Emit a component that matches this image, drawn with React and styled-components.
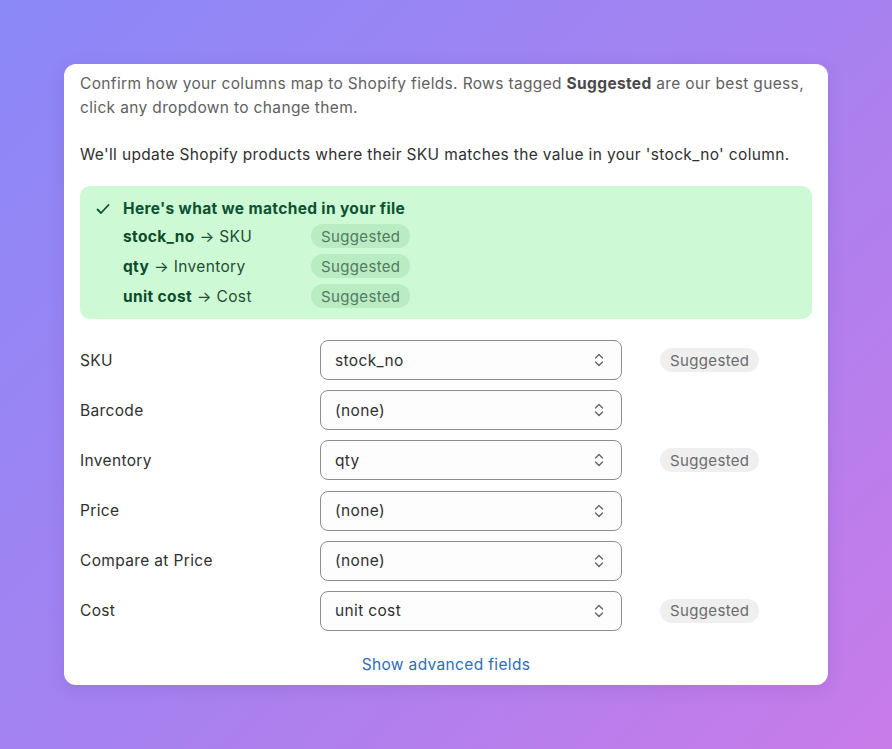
import React from 'react';
import styled, { createGlobalStyle } from 'styled-components';

const GlobalStyle = createGlobalStyle`
  html, body {
    margin: 0;
    padding: 0;
  }
  body {
    font-family: Inter, 'Noto Sans', 'Liberation Sans', sans-serif;
    letter-spacing: 0.35px;
    background: linear-gradient(135deg, #8b88f8 0%, #a582f0 50%, #c87be9 100%);
    min-height: 749px;
  }
`;

const Page = styled.div`
  padding: 64px;
  min-height: 749px;
  box-sizing: border-box;
`;

const Card = styled.div`
  width: 764px;
  box-sizing: border-box;
  background: #ffffff;
  border-radius: 12px;
  padding: 8px 16px 8px;
  box-shadow: 0 4px 18px rgba(60, 30, 120, 0.12);
`;

const Intro = styled.p`
  margin: 0;
  font-size: 15.5px;
  line-height: 24px;
  color: ${props => (props.strong ? '#303030' : '#616161')};
  margin-bottom: ${props => props.gap || 0}px;

  b {
    font-weight: 700;
    color: #4a4a4a;
  }
`;

const MatchBox = styled.div`
  margin-top: 19px;
  background: #cdfad4;
  border-radius: 10px;
  padding: 11px 16px 8px;
  color: #0c5132;
`;

const MatchTitle = styled.div`
  display: flex;
  align-items: center;
  gap: 13px;
  font-size: 15.5px;
  font-weight: 700;
  line-height: 24px;
`;

const MatchRow = styled.div`
  display: grid;
  grid-template-columns: 188px auto;
  align-items: center;
  height: 30px;
  padding-left: 27px;
  font-size: 15.5px;
  color: #1f4d33;

  b {
    font-weight: 700;
    color: #0c4a2c;
  }
`;

const Pill = styled.span`
  justify-self: start;
  display: inline-flex;
  align-items: center;
  height: 24px;
  padding: 0 10px;
  border-radius: 12px;
  font-size: 15px;
  background: ${props => (props.tone === 'green' ? '#b9ecc3' : '#efefef')};
  color: ${props => (props.tone === 'green' ? '#527a5e' : '#6b6b6b')};
`;

const Fields = styled.div`
  margin-top: 21px;
  display: flex;
  flex-direction: column;
  gap: 10.2px;
`;

const FieldRow = styled.div`
  display: grid;
  grid-template-columns: 240px 302px auto;
  align-items: center;
  height: 40px;
`;

const Label = styled.span`
  font-size: 15.5px;
  color: #303030;
`;

const Select = styled.div`
  height: 40px;
  box-sizing: border-box;
  border: 1px solid #8d8d8d;
  border-radius: 8px;
  background: #fdfdfd;
  display: flex;
  align-items: center;
  justify-content: space-between;
  padding: 0 16px 0 14px;
  font-size: 15.5px;
  color: #303030;
  width: 302px;
`;

const FieldPill = styled(Pill)`
  margin-left: 38px;
`;

const Footer = styled.div`
  margin-top: 21px;
  text-align: center;
  line-height: 24px;
`;

const Link = styled.a`
  font-size: 15.5px;
  color: #2f6db5;
  text-decoration: none;
  cursor: pointer;
`;

const Check = () => (
  <svg width="14" height="14" viewBox="0 0 14 14" fill="none">
    <path d="M1.5 7.5 L5 11 L12.5 3" stroke="#0c5132" strokeWidth="1.8" strokeLinecap="round" strokeLinejoin="round" />
  </svg>
);

const Chevrons = () => (
  <svg width="12" height="16" viewBox="0 0 12 16" fill="none">
    <path d="M2.5 6 L6 2.5 L9.5 6" stroke="#666" strokeWidth="1.4" strokeLinecap="round" strokeLinejoin="round" />
    <path d="M2.5 10 L6 13.5 L9.5 10" stroke="#666" strokeWidth="1.4" strokeLinecap="round" strokeLinejoin="round" />
  </svg>
);

const matches = [
  { from: 'stock_no', to: 'SKU' },
  { from: 'qty', to: 'Inventory' },
  { from: 'unit cost', to: 'Cost' },
];

const fields = [
  { label: 'SKU', value: 'stock_no', suggested: true },
  { label: 'Barcode', value: '(none)' },
  { label: 'Inventory', value: 'qty', suggested: true },
  { label: 'Price', value: '(none)' },
  { label: 'Compare at Price', value: '(none)' },
  { label: 'Cost', value: 'unit cost', suggested: true },
];

const App = () => {
  return (
    <Page>
      <GlobalStyle />
      <Card>
        <Intro gap={23}>
          Confirm how your columns map to Shopify fields. Rows tagged <b>Suggested</b> are our best guess,
          click any dropdown to change them.
        </Intro>
        <Intro strong>
          We'll update Shopify products where their SKU matches the value in your 'stock_no' column.
        </Intro>

        <MatchBox>
          <MatchTitle>
            <Check />
            Here's what we matched in your file
          </MatchTitle>
          {matches.map(m => (
            <MatchRow key={m.from}>
              <span><b>{m.from}</b> → {m.to}</span>
              <Pill tone="green">Suggested</Pill>
            </MatchRow>
          ))}
        </MatchBox>

        <Fields>
          {fields.map(f => (
            <FieldRow key={f.label}>
              <Label>{f.label}</Label>
              <Select>
                <span>{f.value}</span>
                <Chevrons />
              </Select>
              {f.suggested ? <FieldPill>Suggested</FieldPill> : <span />}
            </FieldRow>
          ))}
        </Fields>

        <Footer>
          <Link>Show advanced fields</Link>
        </Footer>
      </Card>
    </Page>
  );
};

export default App;
